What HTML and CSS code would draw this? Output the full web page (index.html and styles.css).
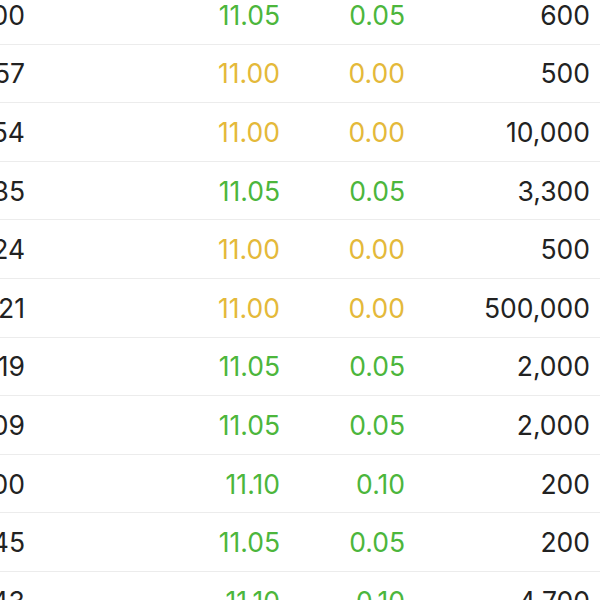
FILE: index.html
```html
<!DOCTYPE html>
<html>
<head>
<meta charset="utf-8">
<link rel="stylesheet" href="styles.css">
</head>
<body>
<div class="table">
  <div class="row"><span class="c1">10:15:00</span><span class="c2 up">11.05</span><span class="c3 up">0.05</span><span class="c4">600</span></div>
  <div class="row"><span class="c1">10:14:57</span><span class="c2 flat">11.00</span><span class="c3 flat">0.00</span><span class="c4">500</span></div>
  <div class="row"><span class="c1">10:14:54</span><span class="c2 flat">11.00</span><span class="c3 flat">0.00</span><span class="c4">10,000</span></div>
  <div class="row"><span class="c1">10:14:35</span><span class="c2 up">11.05</span><span class="c3 up">0.05</span><span class="c4">3,300</span></div>
  <div class="row"><span class="c1">10:14:24</span><span class="c2 flat">11.00</span><span class="c3 flat">0.00</span><span class="c4">500</span></div>
  <div class="row"><span class="c1">10:14:21</span><span class="c2 flat">11.00</span><span class="c3 flat">0.00</span><span class="c4">500,000</span></div>
  <div class="row"><span class="c1">10:14:19</span><span class="c2 up">11.05</span><span class="c3 up">0.05</span><span class="c4">2,000</span></div>
  <div class="row"><span class="c1">10:14:09</span><span class="c2 up">11.05</span><span class="c3 up">0.05</span><span class="c4">2,000</span></div>
  <div class="row"><span class="c1">10:14:00</span><span class="c2 up">11.10</span><span class="c3 up">0.10</span><span class="c4">200</span></div>
  <div class="row"><span class="c1">10:13:45</span><span class="c2 up">11.05</span><span class="c3 up">0.05</span><span class="c4">200</span></div>
  <div class="row"><span class="c1">10:13:43</span><span class="c2 up">11.10</span><span class="c3 up">0.10</span><span class="c4">4,700</span></div>
</div>
</body>
</html>
```
FILE: styles.css
```css
html, body {
  margin: 0;
  padding: 0;
  background: #ffffff;
  overflow: hidden;
  width: 600px;
  height: 600px;
}
.table {
  display: flex;
  flex-direction: column;
  margin-top: -14px;
  margin-left: -120px;
  font-family: Inter, "Noto Sans", sans-serif;
  font-size: 26.5px;
  color: #222222;
}
.row {
  display: grid;
  grid-template-columns: 145px 255px 125px 185px;
  align-items: center;
  height: 57.6px;
  border-bottom: 1px solid #ececec;
}
.row span {
  text-align: right;
  white-space: nowrap;
}
.up { color: #4cb63c; }
.flat { color: #e4b93a; }
```
